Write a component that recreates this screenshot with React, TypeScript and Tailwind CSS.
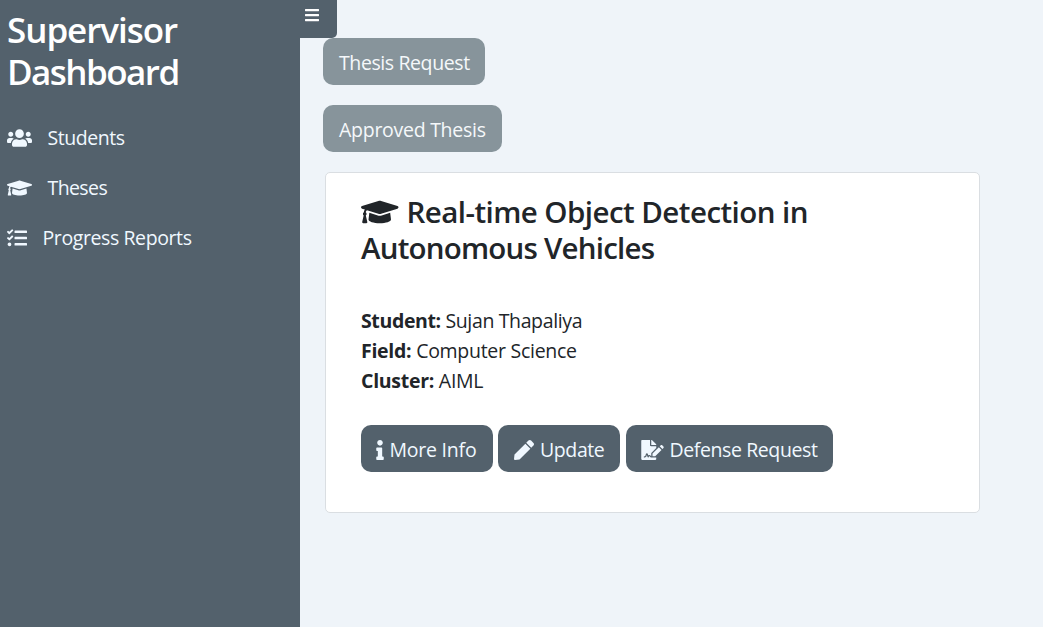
import type { ReactNode } from "react";
import { FaUsers, FaGraduationCap, FaTasks, FaBars, FaInfo, FaPen, FaFileSignature } from "react-icons/fa";

const button = "flex h-[47px] items-center rounded-[10px] bg-[#53616c] pt-[2px] leading-[30px] text-[#f0f8ff]";
const tab = "ml-[23px] flex h-[47px] items-center rounded-[10px] bg-[#87949b] pt-[2px] pl-[16px] leading-[30px] text-[#f5f8fa]";

function NavItem({ icon, children }: { icon: ReactNode; children: ReactNode }) {
  return (
    <a className="flex h-[50px] items-center">
      {icon}
      {children}
    </a>
  );
}

export default function App() {
  return (
    <div className="flex h-[627px] w-[1043px] overflow-hidden bg-[#eff4f9] font-['Open_Sans','Noto_Sans',sans-serif] text-[19.5px] tracking-[-0.4px] whitespace-nowrap text-[#212529]">
      <aside className="w-[300px] shrink-0 bg-[#53616c] text-[#f0f8ff]">
        <h1 className="h-[94px] pt-[9px] pl-[7px] text-[35px] leading-[42px] font-semibold text-white">
          <span className="block tracking-[-1.05px]">Supervisor</span>
          <span className="block tracking-[-1.55px]">Dashboard</span>
        </h1>
        <nav className="mt-[19px] pl-[7px]">
          <NavItem icon={<FaUsers className="mr-[15.5px] h-[20px] w-[25px]" />}><span className="tracking-[-0.45px]">Students</span></NavItem>
          <NavItem icon={<FaGraduationCap className="mr-[15.5px] h-[20px] w-[25px]" />}><span className="tracking-[-0.6px]">Theses</span></NavItem>
          <NavItem icon={<FaTasks className="mr-[15.5px] size-[20px]" />}><span className="tracking-[-0.4px]">Progress Reports</span></NavItem>
        </nav>
      </aside>
      <main className="flex flex-1 flex-col items-start">
        <div className="flex h-[38px] w-[37px] rounded-br-[5px] bg-[#53616c] pt-[7px] pl-[5px] text-white">
          <FaBars className="h-[16px] w-[14px]" />
        </div>
        <div className={tab + " w-[162px]"}>Thesis Request</div>
        <div className={tab + " mt-[20px] w-[179px] tracking-[-0.27px]"}>Approved Thesis</div>
        <section className="mt-[20px] ml-[25px] h-[341px] w-[655px] rounded-[5px] border border-[#dadee2] bg-white pt-[21px] pl-[35px]">
          <h2 className="text-[29.5px] leading-[36px] font-semibold">
            <span className="flex h-[36px] items-center tracking-[-0.55px]">
              <FaGraduationCap className="mr-[8px] h-[30px] w-[37.5px]" />
              <span>Real-time Object Detection in</span>
            </span>
            <span className="block tracking-[-0.78px]">Autonomous Vehicles</span>
          </h2>
          <div className="mt-[40px] leading-[30px]">
            <p className="tracking-[-0.37px]"><b>Student:</b> Sujan Thapaliya</p>
            <p className="tracking-[-0.28px]"><b>Field:</b> Computer Science</p>
            <p className="tracking-[-0.28px]"><b>Cluster:</b> AIML</p>
          </div>
          <div className="mt-[29px] flex">
            <div className={button + " w-[132px] pl-[15px] tracking-[-0.23px]"}><FaInfo className="mr-[5.5px] h-[20px] w-[8px]" />More Info</div>
            <div className={button + " ml-[5px] w-[122px] pl-[16px]"}><FaPen className="mr-[6px] size-[20px]" />Update</div>
            <div className={button + " ml-[6px] w-[207px] pl-[15px]"}><FaFileSignature className="mr-[5.5px] h-[20px] w-[23px]" />Defense Request</div>
          </div>
        </section>
      </main>
    </div>
  );
}
